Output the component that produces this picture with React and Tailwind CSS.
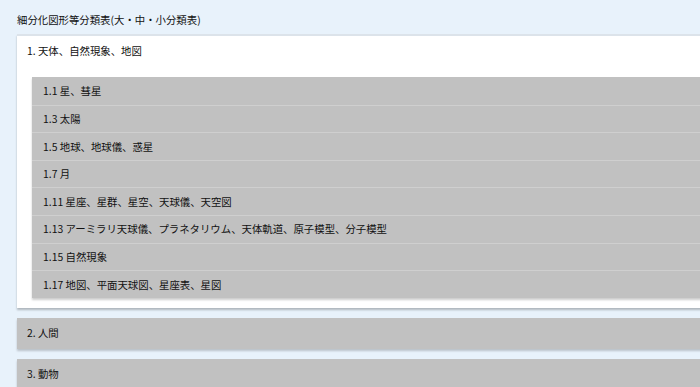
import React from 'react';

const subItems = [
  '1.1 星、彗星',
  '1.3 太陽',
  '1.5 地球、地球儀、惑星',
  '1.7 月',
  '1.11 星座、星群、星空、天球儀、天空図',
  '1.13 アーミラリ天球儀、プラネタリウム、天体軌道、原子模型、分子模型',
  '1.15 自然現象',
  '1.17 地図、平面天球図、星座表、星図',
];

const App = () => {
  return (
    <div
      className="min-h-screen w-full overflow-hidden bg-[#e8f2fb] text-[#111]"
      style={{ fontFamily: '"Noto Sans CJK JP", "Noto Sans", sans-serif' }}
    >
      <div className="w-[730px] pl-[17px] pt-[10px]">
        {/* Title */}
        <h1 className="text-[10.4px] leading-[20px] mb-[4px]">細分化図形等分類表(大・中・小分類表)</h1>

        {/* Open category */}
        <div className="bg-white border-t-2 border-[#dce3ea] shadow-[0_2px_2px_rgba(0,0,0,0.25)]">
          <div className="px-[10px] h-[29px] flex items-center text-[10.4px]">1. 天体、自然現象、地図</div>
          <div className="pl-[15px] pt-[12px] pb-[10px]">
            <div className="shadow-[0_2px_2px_rgba(0,0,0,0.2)]">
              {subItems.map((item, i) => (
                <div
                  key={i}
                  className={`h-[27.6px] flex items-center px-[11px] text-[10.4px] bg-[#c1c1c1] ${
                    i === 0 ? '' : 'border-t border-[#cfcfcf]'
                  }`}
                >
                  {item}
                </div>
              ))}
            </div>
          </div>
        </div>

        {/* Collapsed categories */}
        <div className="mt-[10px] h-[31px] flex items-center px-[10px] text-[10.4px] bg-[#c1c1c1] shadow-[0_2px_2px_rgba(0,0,0,0.2)]">
          2. 人間
        </div>
        <div className="mt-[10px] h-[31px] flex items-center px-[10px] text-[10.4px] bg-[#c1c1c1] shadow-[0_2px_2px_rgba(0,0,0,0.2)]">
          3. 動物
        </div>
      </div>
    </div>
  );
};

export default App;
